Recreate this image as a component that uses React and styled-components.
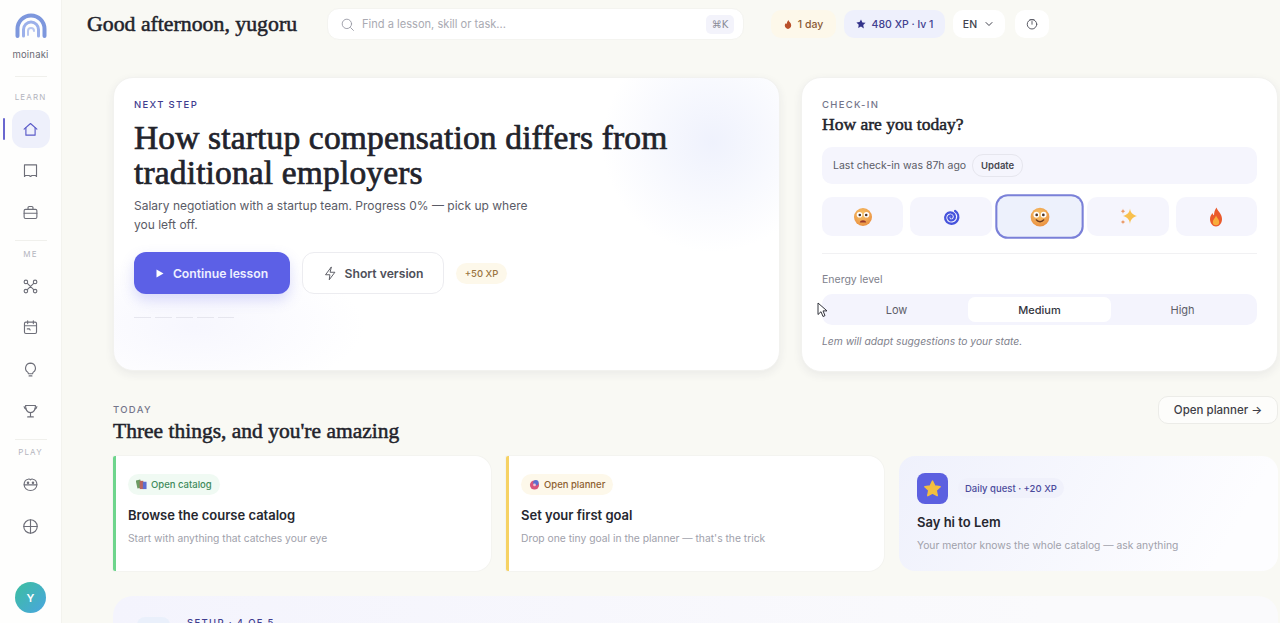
import React from 'react';
import styled, { createGlobalStyle } from 'styled-components';

const GlobalStyle = createGlobalStyle`
  html, body { margin: 0; padding: 0; height: 100%; overflow: hidden; }
  body { font-family: Inter, "Liberation Sans", sans-serif; background: #f9f9f4; color: #22232b; }
  #root { height: 100%; }
  * { box-sizing: border-box; }
`;

const serif = `"Liberation Serif", "DejaVu Serif", serif`;

function Line({ children, size = 18, color = 'currentColor', width = 1.5 }) {
  return (
    <svg width={size} height={size} viewBox="0 0 24 24" fill="none" stroke={color} strokeWidth={width} strokeLinecap="round" strokeLinejoin="round">
      {children}
    </svg>
  );
}

const navIcons = {
  home: <><path d="M3 11.500 12 3.500l9 8" /><path d="M5.500 9.500V20h13V9.500" /></>,
  book: <><path d="M3.500 4h17v16.500l-1.500-1.500h-5l-2 1.500-2-1.500H5l-1.500 1.500z" /></>,
  bag: <><rect x="3" y="7.500" width="18" height="13" rx="2" /><path d="M8.500 7.500V5A1.500 1.500 0 0 1 10 3.500h4A1.500 1.500 0 0 1 15.500 5v2.500" /><path d="M3 13h18" /></>,
  graph: <><circle cx="5.500" cy="5.500" r="2.500" /><circle cx="18.500" cy="5.500" r="2.500" /><circle cx="5.500" cy="18.500" r="2.500" /><circle cx="18.500" cy="18.500" r="2.500" /><path d="M7.500 7.500l9 9M16.500 7.500l-9 9" /></>,
  calendar: <><rect x="3.500" y="4.500" width="17" height="16" rx="2" /><path d="M3.500 9.500h17M8 2.500v4M16 2.500v4M7.500 14h3l1 1.500" /></>,
  bulb: <><path d="M12 3a7 7 0 0 0-4 12.700c.8.700 1 1.500 1 2.300h6c0-.8.200-1.600 1-2.300A7 7 0 0 0 12 3z" /><path d="M10 21h4" /></>,
  trophy: <><path d="M5 5h14c0 6-2.500 10-7 10S5 11 5 5z" /><path d="M3 6.500c0 2 1 3 3 3.500M21 6.500c0 2-1 3-3 3.500M12 15v5M8 21h8" /></>,
  robot: <><path d="M8.500 4.500a3 3 0 0 1 3.500 1 3 3 0 0 1 3.500-1c3 .7 5.500 3.500 5.500 7.500 0 5-4 8.500-9 8.500S3 17 3 12c0-4 2.500-6.800 5.500-7.500z" /><path d="M3 12.500h18" /><circle cx="8.500" cy="9.500" r="1" fill="currentColor" /><circle cx="15.500" cy="9.500" r="1" fill="currentColor" /></>,
  target: <><circle cx="12" cy="12" r="9.500" /><path d="M2.500 12h19M12 2.500v19" /></>,
};

const navGroups = [
  { label: 'LEARN', items: ['home', 'book', 'bag'] },
  { label: 'ME', items: ['graph', 'calendar', 'bulb', 'trophy'] },
  { label: 'PLAY', items: ['robot', 'target'] },
];

const moods = ['worried', 'spiral', 'smile', 'sparkle', 'fire'];

function Mood({ kind }) {
  if (kind === 'spiral') {
    return (
      <svg width="20" height="20" viewBox="0 0 20 20" fill="none">
        <path d="M10.300 10.500c.9-1 0-2.300-1.300-2-1.900.4-2.300 3.200-.4 4.400 2.500 1.500 5.600-.5 5.300-3.500-.4-3.300-4-5-7-3.400-3.200 1.800-3.700 6.500-1 9 3.300 3 8.800 2 10.700-2 1.500-3.200.5-7-2.500-9" stroke="#4653dc" strokeWidth="2.300" strokeLinecap="round" />
      </svg>
    );
  }
  if (kind === 'sparkle') {
    return (
      <svg width="20" height="20" viewBox="0 0 20 20">
        <path d="M12 1.500c.5 4 2.300 6 7 7.500-4.700 1.500-6.500 3.500-7 8-.5-4.500-2.300-6.500-7-8 4.700-1.500 6.500-3.500 7-7.500z" fill="#f8c04e" />
        <path d="M5 1.500c.2 1.500.8 2.200 2.200 2.700C5.800 4.700 5.200 5.400 5 7c-.2-1.600-.8-2.300-2.200-2.800C4.200 3.700 4.800 3 5 1.500zM5 12.500c.2 1.400.8 2 2.200 2.500-1.400.5-2 1.100-2.200 2.500-.2-1.400-.8-2-2.200-2.500 1.400-.5 2-1.100 2.200-2.500z" fill="#ea9a68" />
      </svg>
    );
  }
  if (kind === 'fire') {
    return (
      <svg width="20" height="20" viewBox="0 0 20 20">
        <path d="M10.500 .500c.5 3 5.500 5.800 5.500 11.500 0 4.300-2.700 7.500-6 7.500S4 16.300 4 12c0-3 1.500-4.500 2.500-6 .3 1.300.8 2 1.500 2.300C8 5.500 9 2.500 10.500 .500z" fill="#ea5a2c" />
        <path d="M10 8.500c.5 2 3.200 3.500 3.200 6.500a3.200 3.200 0 0 1-6.400 0c0-2.700 2.700-4 3.200-6.500z" fill="#f8ad3c" />
      </svg>
    );
  }
  return (
    <svg width="20" height="20" viewBox="0 0 20 20">
      <defs>
        <radialGradient id={`face-${kind}`} cx="0.45" cy="0.35" r="0.75">
          <stop offset="0" stopColor="#f7c56a" />
          <stop offset="1" stopColor="#e98a3c" />
        </radialGradient>
      </defs>
      <circle cx="10" cy="10" r="9" fill={`url(#face-${kind})`} />
      <circle cx="6.500" cy="7.800" r="2.800" fill="#fff" />
      <circle cx="13.500" cy="7.800" r="2.800" fill="#fff" />
      <circle cx="6.800" cy="8" r="1.300" fill="#4b3326" />
      <circle cx="13.200" cy="8" r="1.300" fill="#4b3326" />
      {kind === 'smile'
        ? <path d="M6.500 12.800c1.500 2.200 5.500 2.200 7 0" stroke="#6d3a1f" strokeWidth="1.400" fill="none" strokeLinecap="round" />
        : <path d="M6.800 15.500c.5-3 5.900-3 6.400 0z" fill="#9c3a2b" />}
    </svg>
  );
}

export default function App() {
  return (
    <Shell>
      <GlobalStyle />
      <Sidebar>
        <Logo>
          <svg width="32" height="26" viewBox="0 0 32 26" fill="none" strokeLinecap="round">
            <path d="M2.500 23V16a13.500 13.500 0 0 1 27 0v7" stroke="#7d97dd" strokeWidth="4" />
            <path d="M8.500 23v-6.500a7.500 7.500 0 0 1 15 0V23" stroke="#9cb0ea" strokeWidth="3" />
            <path d="M13 22v-4a3 3 0 0 1 6 0" stroke="#b9c7f0" strokeWidth="2" />
          </svg>
          <LogoName>moinaki</LogoName>
        </Logo>
        {navGroups.map((group, index) => (
          <NavGroup key={group.label} $first={index === 0}>
            <NavLabel>{group.label}</NavLabel>
            {group.items.map((item) => (
              <NavItem key={item} $active={item === 'home'}>
                <Line size={17} width={1.6}>{navIcons[item]}</Line>
              </NavItem>
            ))}
          </NavGroup>
        ))}
        <Avatar>Y</Avatar>
      </Sidebar>

      <Main>
        <TopBar>
          <Greeting>Good afternoon, yugoru</Greeting>
          <Search>
            <Line size={15} color="#9b9ca6"><circle cx="11" cy="11" r="7.500" /><path d="m17 17 4.500 4.500" /></Line>
            <SearchText>Find a lesson, skill or task...</SearchText>
            <Kbd>⌘K</Kbd>
          </Search>
          <Pills>
            <StatPill $bg="#fdf8ea" $color="#8a5a35" $w={65}>
              <svg width="8" height="9" viewBox="0 0 10 11"><path d="M5.500 0c.3 2 3.500 3.500 3.500 6.500C9 9 7.200 11 5 11S1 9 1 6.800c0-1.500.8-2.500 1.700-3.300.1.800.4 1.200.9 1.400C3.500 3 4.500 1.500 5.500 0z" fill="#b9502a" /></svg>
              1 day
            </StatPill>
            <StatPill $bg="#eef0fc" $color="#41408f" $w={101}>
              <svg width="10" height="10" viewBox="0 0 24 24" fill="#33338a"><path d="m12 1 3.400 7.200 7.600 1-5.600 5.400 1.400 7.900L12 17.700 5.200 21.500l1.400-7.900L1 8.200l7.600-1z" /></svg>
              480 XP · lv 1
            </StatPill>
            <StatPill $bg="#ffffff" $color="#41424d" $w={52}>
              EN
              <Line size={12} width={2}><path d="m6 9 6 6 6-6" /></Line>
            </StatPill>
            <ClockPill>
              <Line size={12} color="#5d5e68" width={2}><circle cx="12" cy="12.500" r="9.500" /><path d="M8 3.500h8M12 12.500V7" /></Line>
            </ClockPill>
          </Pills>
        </TopBar>

        <Content>
          <TopGrid>
            <Hero>
              <Eyebrow $color="#3f3d8f">NEXT STEP</Eyebrow>
              <HeroTitle>How startup compensation differs from traditional employers</HeroTitle>
              <HeroText>Salary negotiation with a startup team. Progress 0% — pick up where you left off.</HeroText>
              <HeroActions>
                <PrimaryButton>
                  <svg width="8" height="9" viewBox="0 0 8 9"><path d="M0.500 0.500 7.500 4.500 0.500 8.500z" fill="#fff" /></svg>
                  Continue lesson
                </PrimaryButton>
                <GhostButton>
                  <Line size={15} color="#55565f"><path d="M13 2 4 14h7l-1 8 9-12h-7z" /></Line>
                  Short version
                </GhostButton>
                <XpTag>+50 XP</XpTag>
              </HeroActions>
              <Dashes />
            </Hero>

            <CheckIn>
              <Eyebrow $color="#74758a">CHECK-IN</Eyebrow>
              <CheckTitle>How are you today?</CheckTitle>
              <LastCheck>
                Last check-in was 87h ago
                <UpdateButton>Update</UpdateButton>
              </LastCheck>
              <MoodRow>
                {moods.map((mood) => (
                  <MoodTile key={mood} $active={mood === 'smile'}><Mood kind={mood} /></MoodTile>
                ))}
              </MoodRow>
              <Divider />
              <EnergyLabel>Energy level</EnergyLabel>
              <Segments>
                {['Low', 'Medium', 'High'].map((level) => (
                  <Segment key={level} $active={level === 'Medium'}>{level}</Segment>
                ))}
              </Segments>
              <Note>Lem will adapt suggestions to your state.</Note>
              <Cursor width="12" height="16" viewBox="0 0 12 16">
                <path d="M1 1v11.500l3-2.800 2 4.800 2-.9-2-4.700h4z" fill="#fff" stroke="#33343c" strokeWidth="1" strokeLinejoin="round" />
              </Cursor>
            </CheckIn>
          </TopGrid>

          <SectionHead>
            <SectionIntro>
              <Eyebrow $color="#74758a">TODAY</Eyebrow>
              <SectionTitle>Three things, and you're amazing</SectionTitle>
            </SectionIntro>
            <PlannerButton>Open planner →</PlannerButton>
          </SectionHead>

          <Cards>
            <TaskCard $accent="#6ed58c">
              <TaskPill $bg="#f0faf3" $color="#3f8a5b">
                <svg width="11" height="11" viewBox="0 0 12 12"><rect x="0.500" y="1" width="5" height="9" fill="#6d9b63" transform="rotate(-12 3 5)" /><rect x="4" y="2" width="4" height="9" fill="#b9655f" /><rect x="7.500" y="3" width="4" height="8" fill="#5d6fd0" /></svg>
                Open catalog
              </TaskPill>
              <CardTitle>Browse the course catalog</CardTitle>
              <CardText>Start with anything that catches your eye</CardText>
            </TaskCard>
            <TaskCard $accent="#f6d264">
              <TaskPill $bg="#fdf8ea" $color="#8d5f30">
                <svg width="11" height="11" viewBox="0 0 12 12"><circle cx="6" cy="6.500" r="5" fill="#d9557c" /><circle cx="7.500" cy="4" r="3" fill="#5d6fd0" /><circle cx="6" cy="6.500" r="1.500" fill="#f3c3d0" /></svg>
                Open planner
              </TaskPill>
              <CardTitle>Set your first goal</CardTitle>
              <CardText>Drop one tiny goal in the planner — that's the trick</CardText>
            </TaskCard>
            <QuestCard>
              <QuestHead>
                <QuestIcon>
                  <svg width="17" height="17" viewBox="0 0 24 24"><path d="m12 1.500 3.300 6.900 7.500 1-5.500 5.200 1.400 7.500L12 18.500l-6.700 3.600 1.400-7.500L1.200 9.400l7.500-1z" fill="#f4bf3f" stroke="#f4bf3f" strokeWidth="2" strokeLinejoin="round" /></svg>
                </QuestIcon>
                <QuestPill>Daily quest · +20 XP</QuestPill>
              </QuestHead>
              <CardTitle $quest>Say hi to Lem</CardTitle>
              <CardText>Your mentor knows the whole catalog — ask anything</CardText>
            </QuestCard>
          </Cards>

          <SetupCard>
            <SetupTile />
            <SetupLabel>SETUP · 4 OF 5</SetupLabel>
          </SetupCard>
        </Content>
      </Main>
    </Shell>
  );
}

const Shell = styled.div`
  display: flex;
  height: 100vh;
  overflow: hidden;
`;

const Sidebar = styled.aside`
  flex: 0 0 62px;
  display: flex;
  flex-direction: column;
  align-items: center;
  padding-top: 13px;
  background: #fefefd;
  border-right: 1px solid #f3f3ee;
`;

const Logo = styled.div`
  display: flex;
  flex-direction: column;
  align-items: center;
  gap: 10px;
  width: 100%;
  padding-bottom: 15px;
`;

const LogoName = styled.div`
  font-size: 9.500px;
  line-height: 12px;
  letter-spacing: 0.02em;
  color: #6a6b75;
`;

const NavGroup = styled.div`
  display: flex;
  flex-direction: column;
  align-items: center;
  width: 100%;
  gap: 3.500px;
  padding-bottom: 9px;
  &::before {
    content: '';
    width: 32px;
    height: 1px;
    background: #f0f0ec;
    margin-bottom: ${(p) => (p.$first ? '10px' : '3px')};
  }
`;

const NavLabel = styled.div`
  font-size: 8px;
  line-height: 12px;
  letter-spacing: 0.14em;
  color: #b4b5bd;
  margin-bottom: 4px;
`;

const NavItem = styled.div`
  position: relative;
  width: 38px;
  height: 38px;
  display: flex;
  align-items: center;
  justify-content: center;
  border-radius: 12px;
  color: ${(p) => (p.$active ? '#5a5ac8' : '#6e6f79')};
  background: ${(p) => (p.$active ? '#eef0fb' : 'transparent')};
  ${(p) => p.$active && `
    &::before {
      content: '';
      position: absolute;
      left: -9px;
      top: 8px;
      width: 2px;
      height: 22px;
      border-radius: 2px;
      background: #6a67cf;
    }
  `}
`;

const Avatar = styled.div`
  margin-top: auto;
  margin-bottom: 10px;
  width: 31px;
  height: 31px;
  border-radius: 50%;
  display: flex;
  align-items: center;
  justify-content: center;
  font-size: 11px;
  font-weight: 600;
  color: #fff;
  background: linear-gradient(135deg, #3cbf9f, #4aa5e0);
`;

const Main = styled.main`
  flex: 1;
  min-width: 0;
  display: flex;
  flex-direction: column;
`;

const TopBar = styled.header`
  display: flex;
  align-items: center;
  height: 48px;
  padding-left: 25px;
  flex: none;
`;

const Greeting = styled.h1`
  margin: 0;
  width: 240px;
  font-family: ${serif};
  font-size: 21.800px;
  font-weight: 400;
  -webkit-text-stroke: 0.5px #22232b;
  white-space: nowrap;
  color: #22232b;
`;

const Search = styled.div`
  display: flex;
  align-items: center;
  gap: 7px;
  width: 417px;
  height: 32px;
  padding: 0 9px 0 12px;
  border-radius: 12px;
  background: #fff;
  border: 1px solid #f4f4f0;
`;

const SearchText = styled.span`
  flex: 1;
  font-size: 11.100px;
  color: #a9aab2;
`;

const Kbd = styled.span`
  display: flex;
  align-items: center;
  justify-content: center;
  width: 28px;
  height: 19px;
  border-radius: 5px;
  background: #f3f3fb;
  font-family: "DejaVu Sans", sans-serif;
  font-size: 10px;
  color: #8a8b97;
`;

const Pills = styled.div`
  display: flex;
  align-items: center;
  gap: 8px;
  margin-left: 27px;
`;

const StatPill = styled.div`
  display: flex;
  align-items: center;
  justify-content: center;
  gap: 6px;
  width: ${(p) => p.$w}px;
  height: 28px;
  border-radius: 10px;
  font-size: 10.500px;
  font-weight: 500;
  background: ${(p) => p.$bg};
  color: ${(p) => p.$color};
`;

const ClockPill = styled.div`
  display: flex;
  align-items: center;
  justify-content: center;
  width: 34px;
  height: 28px;
  margin-left: 2px;
  border-radius: 10px;
  background: #fff;
`;

const Content = styled.div`
  padding: 28.500px 2px 0 51px;
`;

const TopGrid = styled.div`
  display: grid;
  grid-template-columns: 667px 477px;
  gap: 21px;
`;

const Hero = styled.section`
  height: 294px;
  padding: 21.500px 20px;
  border-radius: 20px;
  border: 1px solid #f2f2ef;
  box-shadow: 0 3px 10px rgba(40, 40, 70, 0.07);
  background:
    radial-gradient(circle at 90% 22%, rgba(226, 231, 251, 0.55), rgba(226, 231, 251, 0) 110px),
    radial-gradient(ellipse at 12% 85%, rgba(240, 240, 253, 0.55), rgba(240, 240, 253, 0) 170px),
    #fff;
`;

const Eyebrow = styled.div`
  font-size: 9.500px;
  line-height: 12px;
  font-weight: 500;
  letter-spacing: 0.14em;
  color: ${(p) => p.$color};
`;

const HeroTitle = styled.h2`
  margin: 9px 0 0;
  max-width: 560px;
  font-family: ${serif};
  font-size: 33.500px;
  line-height: 35px;
  font-weight: 400;
  letter-spacing: 0.15px;
  -webkit-text-stroke: 0.7px #22232b;
  color: #22232b;
`;

const HeroText = styled.p`
  margin: 6px 0 0;
  width: 410px;
  font-size: 12px;
  line-height: 19px;
  color: #5a5b66;
`;

const HeroActions = styled.div`
  display: flex;
  align-items: center;
  gap: 12px;
  margin-top: 18px;
`;

const PrimaryButton = styled.button`
  display: flex;
  align-items: center;
  justify-content: center;
  gap: 9px;
  width: 156px;
  height: 42px;
  border: 0;
  border-radius: 12px;
  font-family: inherit;
  font-size: 12.200px;
  font-weight: 600;
  color: #eef0ff;
  background: #5c60e6;
  box-shadow: 0 6px 14px rgba(92, 96, 230, 0.22);
`;

const GhostButton = styled.button`
  display: flex;
  align-items: center;
  justify-content: center;
  gap: 7px;
  width: 142px;
  height: 42px;
  border: 1px solid #ececf0;
  border-radius: 12px;
  font-family: inherit;
  font-size: 12.200px;
  font-weight: 600;
  color: #4e4f59;
  background: #fff;
`;

const XpTag = styled.span`
  display: flex;
  align-items: center;
  justify-content: center;
  width: 51px;
  height: 21px;
  border-radius: 11px;
  font-size: 9.500px;
  font-weight: 500;
  color: #9a7440;
  background: #fdf8ea;
`;

const Dashes = styled.div`
  width: 100px;
  height: 1px;
  margin-top: 23px;
  background: repeating-linear-gradient(90deg, #e6e6ee 0 17px, transparent 17px 21px);
`;

const CheckIn = styled.section`
  position: relative;
  height: 295px;
  padding: 21.500px 20px;
  border-radius: 20px;
  border: 1px solid #f2f2ef;
  box-shadow: 0 3px 10px rgba(40, 40, 70, 0.07);
  background: #fff;
`;

const CheckTitle = styled.h3`
  margin: 2px 0 0;
  font-family: ${serif};
  font-size: 17.500px;
  line-height: 22px;
  font-weight: 400;
  -webkit-text-stroke: 0.5px #22232b;
`;

const LastCheck = styled.div`
  display: flex;
  align-items: center;
  gap: 6px;
  height: 37px;
  margin-top: 12px;
  padding-left: 11px;
  border-radius: 10px;
  font-size: 10.500px;
  color: #5a5b66;
  background: #f5f5fd;
`;

const UpdateButton = styled.span`
  display: flex;
  align-items: center;
  justify-content: center;
  width: 51px;
  height: 23px;
  border-radius: 11px;
  border: 1px solid #e6e6ee;
  font-size: 9.500px;
  font-weight: 600;
  color: #45464f;
`;

const MoodRow = styled.div`
  display: grid;
  grid-template-columns: repeat(5, 1fr);
  gap: 7px;
  margin-top: 13px;
`;

const MoodTile = styled.div`
  display: flex;
  align-items: center;
  justify-content: center;
  height: 39px;
  border-radius: 10px;
  background: ${(p) => (p.$active ? '#edf1fc' : '#f5f5fd')};
  ${(p) => p.$active && `
    box-shadow: 0 0 0 2px #7a80d8;
    transform: scale(1.04);
  `}
`;

const Divider = styled.div`
  height: 1px;
  margin-top: 17px;
  background: #f1f1f3;
`;

const EnergyLabel = styled.div`
  margin-top: 19px;
  font-size: 10.500px;
  line-height: 13px;
  color: #80818c;
`;

const Segments = styled.div`
  display: grid;
  grid-template-columns: repeat(3, 1fr);
  height: 31px;
  margin-top: 8px;
  padding: 3px;
  border-radius: 10px;
  background: #f4f4fd;
`;

const Segment = styled.div`
  display: flex;
  align-items: center;
  justify-content: center;
  border-radius: 7px;
  font-size: 11px;
  font-weight: ${(p) => (p.$active ? 500 : 400)};
  color: ${(p) => (p.$active ? '#34353e' : '#5d5e69')};
  background: ${(p) => (p.$active ? '#fff' : 'transparent')};
`;

const Note = styled.div`
  margin-top: 10px;
  font-size: 10.300px;
  line-height: 13px;
  font-style: italic;
  color: #80818c;
`;

const Cursor = styled.svg`
  position: absolute;
  left: 15px;
  top: 224px;
`;

const SectionHead = styled.div`
  display: flex;
  align-items: flex-start;
  justify-content: space-between;
  margin-top: 24px;
`;

const SectionIntro = styled.div`
  padding-top: 8px;
`;

const SectionTitle = styled.h3`
  margin: 2px 0 0;
  font-family: ${serif};
  font-size: 21.500px;
  line-height: 26px;
  font-weight: 400;
  -webkit-text-stroke: 0.5px #22232b;
`;

const PlannerButton = styled.button`
  width: 120px;
  height: 28px;
  border: 1px solid #ecece8;
  border-radius: 10px;
  font-family: inherit;
  font-size: 11.500px;
  font-weight: 500;
  color: #3d3e47;
  background: #fdfdfb;
`;

const Cards = styled.div`
  display: grid;
  grid-template-columns: 378px 378px 379px;
  gap: 15px;
  margin-top: 12px;
`;

const TaskCard = styled.article`
  height: 115px;
  padding: 18px 12px;
  border-left: 3px solid ${(p) => p.$accent};
  border-radius: 2px 16px 16px 2px;
  background: #fff;
  box-shadow: 0 0 0 1px #f4f4f0;
`;

const TaskPill = styled.span`
  display: inline-flex;
  align-items: center;
  gap: 4px;
  height: 21px;
  padding: 0 8px;
  border-radius: 11px;
  font-size: 9.500px;
  font-weight: 500;
  color: ${(p) => p.$color};
  background: ${(p) => p.$bg};
`;

const CardTitle = styled.div`
  margin-top: ${(p) => (p.$quest ? '9px' : '11px')};
  font-size: 13px;
  line-height: 18px;
  font-weight: 600;
  color: #26272f;
`;

const CardText = styled.div`
  margin-top: 7.500px;
  font-size: 10.300px;
  line-height: 14px;
  color: #a0a1ab;
`;

const QuestCard = styled.article`
  height: 115px;
  padding: 17px 18px;
  border-radius: 16px;
  background: linear-gradient(120deg, #eff1fc, #fdfdff 85%);
`;

const QuestHead = styled.div`
  display: flex;
  align-items: center;
  gap: 10px;
`;

const QuestIcon = styled.div`
  display: flex;
  align-items: center;
  justify-content: center;
  width: 31px;
  height: 31px;
  border-radius: 8px;
  background: #5c60e0;
`;

const QuestPill = styled.span`
  display: inline-flex;
  align-items: center;
  height: 20px;
  padding: 0 7px;
  border-radius: 10px;
  font-size: 9.500px;
  font-weight: 500;
  color: #4b4a9c;
  background: #f0f1fb;
`;

const SetupCard = styled.section`
  display: flex;
  gap: 17px;
  height: 120px;
  margin-top: 25px;
  padding: 21px 24px;
  border-radius: 20px;
  background: linear-gradient(90deg, #f4f4fd, #fafafc 80%);
`;

const SetupTile = styled.div`
  width: 33px;
  height: 33px;
  border-radius: 8px;
  background: #eaf0fb;
`;

const SetupLabel = styled.div`
  font-size: 9.500px;
  line-height: 12px;
  font-weight: 500;
  letter-spacing: 0.14em;
  color: #3f3d8f;
`;
